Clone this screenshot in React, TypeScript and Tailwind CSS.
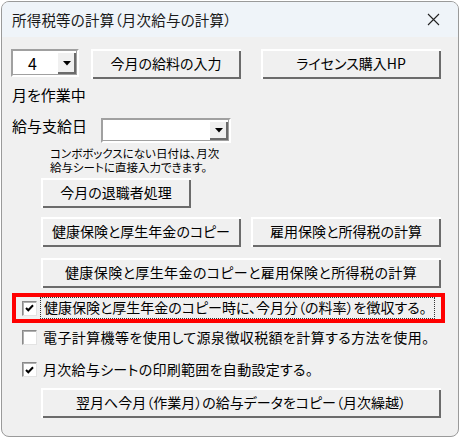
import { ReactNode } from 'react'

const font = "[font-family:'Noto_Sans_CJK_JP','Noto_Sans',sans-serif] [font-feature-settings:'palt']"

function Btn({ w, children, className = '' }: { w: string; children: ReactNode; className?: string }) {
  return (
    <div
      className={`${w} h-[30px] flex items-center justify-center bg-[#f0f0f0] text-[14px] text-black shadow-[inset_2px_2px_0_#ffffff,inset_-2px_-2px_0_#6b6b6b] ${className}`}
    >
      <span className="-mt-[1px]">{children}</span>
    </div>
  )
}

function Arrow() {
  return (
    <div className="w-[19px] h-full bg-[#f0f0f0] flex items-center justify-center shadow-[inset_1px_1px_0_#ffffff,inset_-2px_-2px_0_#6b6b6b]">
      <svg width="8" height="5" viewBox="0 0 8 5">
        <polygon points="0,0 8,0 4,4.5" fill="#000" />
      </svg>
    </div>
  )
}

function Check({ checked }: { checked: boolean }) {
  return (
    <div className="w-[15px] h-[15px] bg-white border border-t-[#8a8a8a] border-l-[#8a8a8a] border-r-[#e3e3e3] border-b-[#e3e3e3] shadow-[inset_1px_1px_0_#b0b0b0] flex items-center justify-center shrink-0">
      {checked && (
        <svg width="9" height="8" viewBox="0 0 9 8">
          <path d="M1 4 L3.3 6.3 L8 1.3" stroke="#000" strokeWidth="2" fill="none" />
        </svg>
      )}
    </div>
  )
}

export default function App() {
  return (
    <div className={`w-[462px] h-[439px] bg-white pt-[1px] pl-[1px] ${font}`}>
      <div className="w-[458px] h-[436px] rounded-[8px] border border-[#9a9a9a] bg-[#f0f0f0] overflow-hidden flex flex-col">
        <div className="h-[35px] bg-[#eff4f9] flex items-center justify-between pl-[10px] pr-[18px] shrink-0">
          <span className="text-[14.5px] text-[#1a1a1a] tracking-[0.2px]">所得税等の計算（月次給与の計算）</span>
          <svg width="13" height="13" viewBox="0 0 13 13">
            <path d="M1 1 L12 12 M12 1 L1 12" stroke="#222" strokeWidth="1.1" />
          </svg>
        </div>

        <div className="flex flex-col text-black">
          <div className="flex mt-[12px] h-[28px]">
            <div className="ml-[9px] w-[68px] h-[28px] bg-white flex border-2 border-t-[#a0a0a0] border-l-[#a0a0a0] border-r-[#ffffff] border-b-[#ffffff] shadow-[inset_-1px_-1px_0_#a0a0a0]">
              <div className="flex-1 flex items-center pl-[15px] text-[16px] leading-none">4</div>
              <div className="py-[1px] pr-[1px] h-full">
                <Arrow />
              </div>
            </div>
            <Btn w="w-[150px]" className="ml-[12px] h-[28px]">今月の給料の入力</Btn>
            <Btn w="w-[180px]" className="ml-[20px] h-[28px]">ライセンス購入HP</Btn>
          </div>

          <div className="mt-[7px] ml-[10px] h-[22px] leading-[22px] text-[15px]">月を作業中</div>

          <div className="flex mt-[12px] ml-[10px] h-[25px]">
            <div className="w-[89px] text-[15px] leading-[18px] -mt-[1px]">給与支給日</div>
            <div className="w-[130px] h-[25px] bg-white flex justify-end border-2 border-t-[#a0a0a0] border-l-[#a0a0a0] border-r-[#ffffff] border-b-[#ffffff] shadow-[inset_-1px_-1px_0_#a0a0a0]">
              <div className="py-[1px] pr-[1px] h-full">
                <Arrow />
              </div>
            </div>
          </div>

          <div className="mt-[4px] ml-[48px] h-[27px] text-[11.5px] leading-[13.5px] tracking-[0px]">
            <div>コンボボックスにない日付は、月次</div>
            <div>給与シートに直接入力できます。</div>
          </div>

          <Btn w="w-[150px]" className="mt-[4px] ml-[39px]">今月の退職者処理</Btn>

          <div className="flex mt-[9px] ml-[39px]">
            <Btn w="w-[200px]">健康保険と厚生年金のコピー</Btn>
            <Btn w="w-[190px]" className="ml-[10px]">雇用保険と所得税の計算</Btn>
          </div>

          <Btn w="w-[400px]" className="mt-[11px] ml-[39px] tracking-[0.4px]">健康保険と厚生年金のコピーと雇用保険と所得税の計算</Btn>

          <div className="mt-[5px] ml-[10px] w-[433px] h-[30px] border-4 border-[#ff0000] flex items-center">
            <div className="ml-[6px]">
              <Check checked />
            </div>
            <div className="ml-[3px] w-[395px] h-[22px] border border-dotted border-[#333] flex items-center pl-[3px] text-[14px]">
              <span className="-mt-[1px]">健康保険と厚生年金のコピー時に、今月分（の料率）を徴収する。</span>
            </div>
          </div>

          <div className="flex items-center mt-[7px] ml-[20px] h-[15px]">
            <Check checked={false} />
            <span className="ml-[6px] text-[14px] tracking-[0.4px]">電子計算機等を使用して源泉徴収税額を計算する方法を使用。</span>
          </div>

          <div className="flex items-center mt-[17px] ml-[20px] h-[15px]">
            <Check checked />
            <span className="ml-[6px] text-[14px] tracking-[0.3px]">月次給与シートの印刷範囲を自動設定する。</span>
          </div>

          <Btn w="w-[400px]" className="mt-[11px] ml-[39px]">翌月へ今月（作業月）の給与データをコピー（月次繰越）</Btn>
        </div>
      </div>
    </div>
  )
}
